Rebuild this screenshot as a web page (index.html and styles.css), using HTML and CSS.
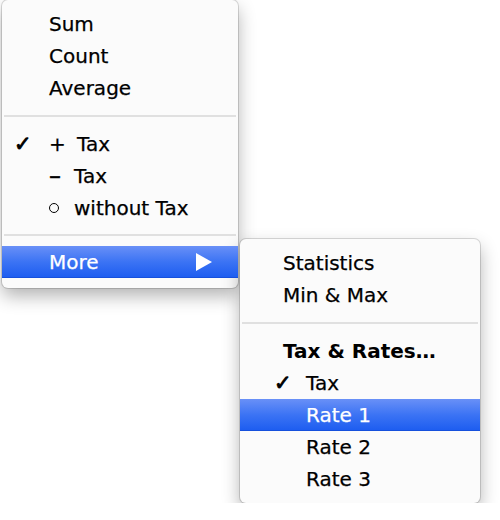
FILE: index.html
```html
<!DOCTYPE html>
<html>
<head>
<meta charset="utf-8">
<link rel="stylesheet" href="styles.css">
</head>
<body>
<div class="stage">
  <div class="menu main">
    <div class="item">Sum</div>
    <div class="item">Count</div>
    <div class="item">Average</div>
    <div class="sep"></div>
    <div class="item"><span class="check">✓</span><span class="sym plus">+</span>Tax</div>
    <div class="item"><span class="sym dash">–</span>Tax</div>
    <div class="item"><span class="sym"><span class="circle"></span></span>without Tax</div>
    <div class="sep sep-b"></div>
    <div class="item active">More<span class="arrow"></span></div>
  </div>
  <div class="menu sub">
    <div class="item">Statistics</div>
    <div class="item">Min &amp; Max</div>
    <div class="sep"></div>
    <div class="item header">Tax &amp; Rates…</div>
    <div class="item indent"><span class="check">✓</span>Tax</div>
    <div class="item indent active">Rate 1</div>
    <div class="item indent">Rate 2</div>
    <div class="item indent">Rate 3</div>
  </div>
</div>
</body>
</html>
```
FILE: styles.css
```css
html, body {
  margin: 0;
  padding: 0;
  background: #ffffff;
}
body {
  font-family: "DejaVu Sans", "Liberation Sans", sans-serif;
  font-size: 20px;
  color: #000;
  -webkit-text-stroke: 0.25px #000;
}
.stage {
  display: flex;
  align-items: flex-start;
  padding-left: 2px;
}
.menu {
  background: #fbfbfb;
  border-radius: 6px;
  box-shadow: 0 0 0 1px rgba(0, 0, 0, 0.14), 0 8px 18px rgba(0, 0, 0, 0.3);
  box-sizing: border-box;
}
.main {
  width: 236px;
  padding: 8px 0 10px;
}
.sub {
  width: 240px;
  margin-left: 2px;
  margin-top: 239px;
  padding: 8px 0 8px;
}
.item {
  position: relative;
  height: 32px;
  display: flex;
  align-items: center;
  padding-left: 47px;
  white-space: nowrap;
}
.sub .item {
  padding-left: 43px;
}
.sub .item.indent {
  padding-left: 66px;
}
.header {
  font-weight: bold;
  -webkit-text-stroke: 0;
}
.check {
  position: absolute;
  left: 12px;
  top: 0;
  line-height: 32px;
  font-size: 21px;
  -webkit-text-stroke: 0.9px #000;
}
.sub .check {
  left: 34px;
}
.sym {
  display: inline-flex;
  align-items: center;
  width: 25px;
}
.sym.plus {
  width: 28px;
}
.sym.dash {
  font-size: 24px;
  -webkit-text-stroke: 0.4px #000;
}
.circle {
  display: inline-block;
  width: 8px;
  height: 8px;
  border: 1.5px solid #000;
  border-radius: 50%;
}
.sep {
  height: 24px;
  display: flex;
  align-items: center;
}
.sep::before {
  content: "";
  display: block;
  flex: 1;
  height: 2px;
  margin: 0 2px;
  background: #e0e0e0;
}
.sep-b {
  height: 22px;
}
.active {
  color: #fff;
  -webkit-text-stroke: 0.25px #fff;
  background: linear-gradient(to bottom, #6990f7 0%, #3b73f4 50%, #1c5cf0 100%);
  box-shadow: inset 0 -1px 0 #1650dc;
}
.arrow {
  width: 0;
  height: 0;
  margin-left: auto;
  margin-right: 26px;
  border-left: 16px solid #fff;
  border-top: 9px solid transparent;
  border-bottom: 9px solid transparent;
}
```
